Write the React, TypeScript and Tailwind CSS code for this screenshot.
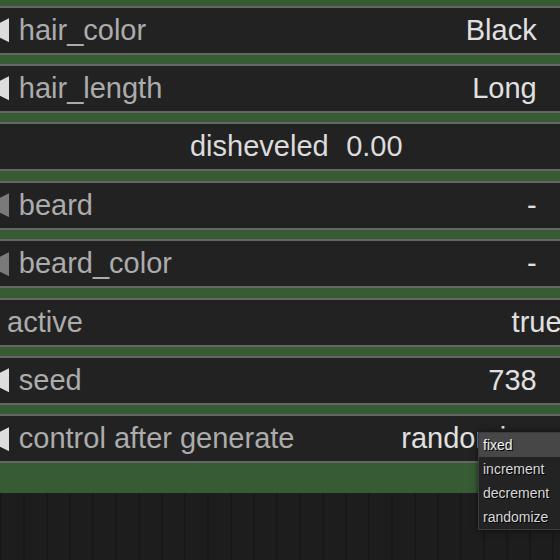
import React from "react"

interface Widget {
  kind: "combo" | "slider" | "toggle"
  label: string
  value: string
  disabled?: boolean
}

const widgets: Widget[] = [
  { kind: "combo", label: "hair_color", value: "Black" },
  { kind: "combo", label: "hair_length", value: "Long" },
  { kind: "slider", label: "disheveled", value: "0.00" },
  { kind: "combo", label: "beard", value: "-", disabled: true },
  { kind: "combo", label: "beard_color", value: "-", disabled: true },
  { kind: "toggle", label: "active", value: "true" },
  { kind: "combo", label: "seed", value: "738" },
  { kind: "combo", label: "control after generate", value: "randomize" },
]

const menuItems = ["fixed", "increment", "decrement", "randomize"]

function Arrow({ dir, color }: { dir: "left" | "right"; color: string }) {
  const pts = dir === "left" ? "0,12.15 24.3,0 24.3,24.3" : "24.3,12.15 0,0 0,24.3"
  return (
    <svg width="24.3" height="24.3" viewBox="0 0 24.3 24.3" className="shrink-0">
      <polygon points={pts} fill={color} />
    </svg>
  )
}

function WidgetRow({ w }: { w: Widget }) {
  const rowBase =
    "mx-[36.5px] h-[49px] shrink-0 flex items-center bg-[#222222] border-y-2 border-[#666666] text-[29px] leading-none"

  if (w.kind === "slider") {
    return (
      <div className={`${rowBase} justify-center gap-[17.5px] text-[#dcdcdc]`}>
        <span>{w.label}</span>
        <span>{w.value}</span>
      </div>
    )
  }

  if (w.kind === "toggle") {
    return (
      <div className={`${rowBase} pl-[37px] pr-[61px]`}>
        <span className="text-[#acacac]">{w.label}</span>
        <span className="ml-auto text-[#e0e0e0]">{w.value}</span>
      </div>
    )
  }

  const arrowColor = w.disabled ? "#7a7a7a" : "#dddddd"
  return (
    <div className={`${rowBase} pl-[14.5px] pr-[16.6px]`}>
      <Arrow dir="left" color={arrowColor} />
      <span className="ml-[10px] text-[#acacac] whitespace-nowrap">{w.label}</span>
      <span className="ml-auto text-[#e0e0e0] whitespace-nowrap">{w.value}</span>
      <span className="ml-[45px]">
        <Arrow dir="right" color={arrowColor} />
      </span>
    </div>
  )
}

export default function App() {
  return (
    <div className="relative w-[560px] h-[560px] overflow-hidden bg-[#1c1c1c] bg-[repeating-linear-gradient(90deg,#181818_0px,#181818_2px,#1d1d1d_2px,#1d1d1d_23px)] font-['Liberation_Sans',Arial,sans-serif]">
      {/* node body */}
      <div className="ml-[-66.5px] w-[725.6px] bg-[#375c33] pt-[5.5px] pb-[30px] flex flex-col gap-[9.43px]">
        {widgets.map((w) => (
          <WidgetRow key={w.label} w={w} />
        ))}
      </div>

      {/* combo context menu */}
      <div className="absolute left-[478px] top-[432px] w-[100px] bg-[#232323] border border-[#3c3c3c] shadow-[0_0_6px_rgba(0,0,0,0.6)] text-[14px] leading-none">
        {menuItems.map((item) => (
          <div
            key={item}
            className={`h-[24px] flex items-center pl-[4px] [text-shadow:1px_1px_0_#000] ${
              item === "fixed" ? "bg-[#474747] text-[#f2f2f2]" : "text-[#d8d8d8]"
            }`}
          >
            {item}
          </div>
        ))}
      </div>
    </div>
  )
}
